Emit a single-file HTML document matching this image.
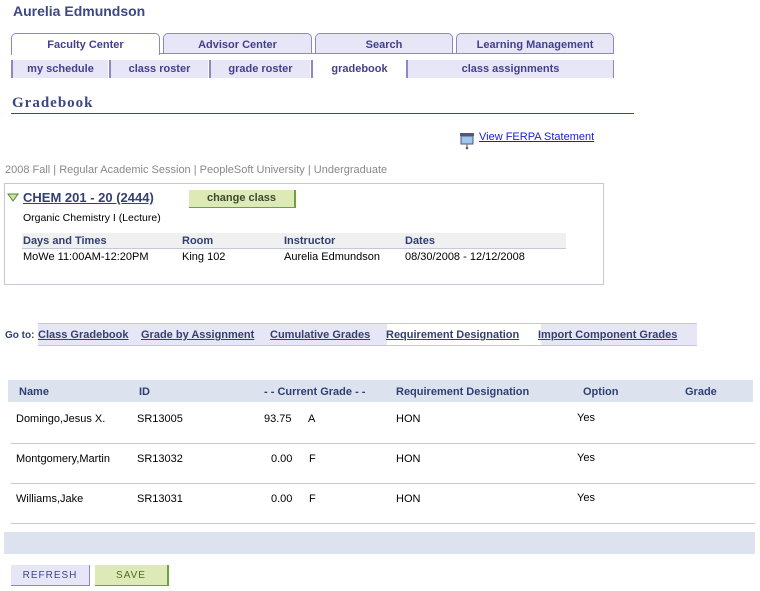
<!DOCTYPE html>
<html><head><style>
body{margin:0;width:760px;height:591px;background:#fff;font-family:"Liberation Sans",Verdana,sans-serif;position:relative;overflow:hidden}
.a{position:absolute}
.tab{position:absolute;top:33px;height:21px;background:#e7e6f6;border:1px solid #8c87cc;border-bottom:none;border-radius:5px 5px 0 0;font-size:11px;font-weight:bold;color:#433f8f;text-align:center;line-height:23px;box-sizing:border-box}
.st{position:absolute;top:60px;height:18px;background:#e7e6f6;border-left:2px solid #8c87cc;font-size:11px;font-weight:bold;color:#433f8f;text-align:center;line-height:19px;box-sizing:border-box}
.hd{font-size:11px;font-weight:bold;color:#2f3f73}
.td{font-size:11px;color:#000}
.lk{color:#34406f;text-decoration:underline;font-weight:bold;font-size:11px}
</style></head><body>
<div class="a" style="left:13px;top:3px;font-size:14px;font-weight:bold;color:#3c4783">Aurelia Edmundson</div>
<div class="tab" style="left:11px;width:149px;height:22px;background:#fff">Faculty Center</div>
<div class="tab" style="left:163px;width:149px">Advisor Center</div>
<div class="tab" style="left:315px;width:138px">Search</div>
<div class="tab" style="left:456px;width:158px">Learning Management</div>
<div class="a" style="left:159px;top:53px;width:455px;height:1px;background:#8c87cc"></div>
<div class="st" style="left:11px;width:97px">my schedule</div>
<div class="st" style="left:109px;width:99px">class roster</div>
<div class="st" style="left:209px;width:101px">grade roster</div>
<div class="st" style="left:311px;width:95px;background:#fff">gradebook</div>
<div class="st" style="left:406px;width:208px;border-right:1px solid #8c87cc">class assignments</div>
<div class="a" style="left:12px;top:95px;font-family:'Liberation Serif',serif;font-size:15px;font-weight:bold;color:#3c4783;letter-spacing:1px">Gradebook</div>
<div class="a" style="left:11px;top:113px;width:623px;height:1px;background:#3c4783"></div>
<svg class="a" style="left:459px;top:132px" width="16" height="18"><rect x="1" y="1" width="14" height="3" fill="#557"/><rect x="2" y="4" width="12" height="8" fill="#9cc7ee" stroke="#557"/><line x1="8" y1="12" x2="8" y2="16" stroke="#557"/><circle cx="8" cy="16" r="1.3" fill="#557"/></svg>
<div class="a" style="left:479px;top:131px;font-size:11px;color:#1a1ae0;text-decoration:underline">View FERPA Statement</div>
<div class="a" style="left:5px;top:164px;font-size:11px;color:#888">2008 Fall | Regular Academic Session | PeopleSoft University | Undergraduate</div>
<div class="a" style="left:4px;top:183px;width:598px;height:100px;border:1px solid #c3c9d9"></div>
<svg class="a" style="left:7px;top:193px" width="12" height="10"><polygon points="1,1 11,1 6,8" fill="#cfe3a8" stroke="#4d8a2a"/></svg>
<div class="a" style="left:23px;top:190px;font-size:13px;color:#34406f;text-decoration:underline;font-weight:bold">CHEM 201 - 20 (2444)</div>
<div class="a" style="left:189px;top:190px;width:105px;height:17px;background:#dde9b7;border-right:2px solid #6fa03c;border-bottom:1px solid #6fa03c;font-size:11px;font-weight:bold;color:#3b4a2a;text-align:center;line-height:17px">change class</div>
<div class="a td" style="left:23px;top:212px;font-size:10.5px">Organic Chemistry I (Lecture)</div>
<div class="a" style="left:22px;top:233px;width:544px;height:15px;background:#f0f0f0;border-bottom:1px solid #c3c9d9"></div>
<div class="a hd" style="left:23px;top:235px">Days and Times</div>
<div class="a hd" style="left:182px;top:235px">Room</div>
<div class="a hd" style="left:284px;top:235px">Instructor</div>
<div class="a hd" style="left:405px;top:235px">Dates</div>
<div class="a td" style="left:23px;top:251px">MoWe 11:00AM-12:20PM</div>
<div class="a td" style="left:182px;top:251px">King 102</div>
<div class="a td" style="left:284px;top:251px">Aurelia Edmundson</div>
<div class="a td" style="left:405px;top:251px">08/30/2008 - 12/12/2008</div>
<div class="a" style="left:38px;top:323px;width:659px;height:21px;background:#e7e6f6;border-top:1px solid #c6c6e4;border-bottom:1px solid #c6c6e4"></div>
<div class="a" style="left:387px;top:324px;width:154px;height:21px;background:#fff"></div>
<div class="a hd" style="left:5px;top:330px;font-size:10px;color:#34406f">Go to:</div>
<div class="a lk" style="left:38px;top:329px">Class Gradebook</div>
<div class="a lk" style="left:141px;top:329px">Grade by Assignment</div>
<div class="a lk" style="left:270px;top:329px">Cumulative Grades</div>
<div class="a lk" style="left:386px;top:329px">Requirement Designation</div>
<div class="a lk" style="left:538px;top:329px">Import Component Grades</div>
<div class="a" style="left:8px;top:380px;width:745px;height:22px;background:#dde3ee"></div>
<div class="a hd" style="left:19px;top:386px">Name</div>
<div class="a hd" style="left:139px;top:386px">ID</div>
<div class="a hd" style="left:264px;top:386px">- - Current Grade - -</div>
<div class="a hd" style="left:396px;top:386px">Requirement Designation</div>
<div class="a hd" style="left:583px;top:386px">Option</div>
<div class="a hd" style="left:685px;top:386px">Grade</div>
<div class="a" style="left:11px;top:443px;width:744px;height:1px;background:#c3c9d9"></div>
<div class="a" style="left:11px;top:483px;width:744px;height:1px;background:#c3c9d9"></div>
<div class="a" style="left:11px;top:523px;width:744px;height:1px;background:#c3c9d9"></div>
<div class="a td" style="left:16px;top:413px">Domingo,Jesus X.</div><div class="a td" style="left:137px;top:413px">SR13005</div><div class="a td" style="left:264px;top:413px">93.75</div><div class="a td" style="left:308px;top:413px">A</div><div class="a td" style="left:396px;top:413px">HON</div><div class="a td" style="left:577px;top:412px">Yes</div>
<div class="a td" style="left:16px;top:453px">Montgomery,Martin</div><div class="a td" style="left:137px;top:453px">SR13032</div><div class="a td" style="left:271px;top:453px">0.00</div><div class="a td" style="left:309px;top:453px">F</div><div class="a td" style="left:396px;top:453px">HON</div><div class="a td" style="left:577px;top:452px">Yes</div>
<div class="a td" style="left:16px;top:493px">Williams,Jake</div><div class="a td" style="left:137px;top:493px">SR13031</div><div class="a td" style="left:271px;top:493px">0.00</div><div class="a td" style="left:309px;top:493px">F</div><div class="a td" style="left:396px;top:493px">HON</div><div class="a td" style="left:577px;top:492px">Yes</div>
<div class="a" style="left:4px;top:532px;width:751px;height:22px;background:#dde3ee"></div>
<div class="a" style="left:11px;top:565px;width:78px;height:20px;background:#e7e6f6;border-right:1px solid #8c87cc;border-bottom:1px solid #8c87cc;font-size:10px;color:#3c4783;text-align:center;line-height:21px;letter-spacing:1px">REFRESH</div>
<div class="a" style="left:95px;top:565px;width:72px;height:20px;background:#dde9b7;border-right:2px solid #6fa03c;border-bottom:1px solid #6fa03c;font-size:10px;color:#4d6a2a;text-align:center;line-height:21px;letter-spacing:1px">SAVE</div>
</body></html>
